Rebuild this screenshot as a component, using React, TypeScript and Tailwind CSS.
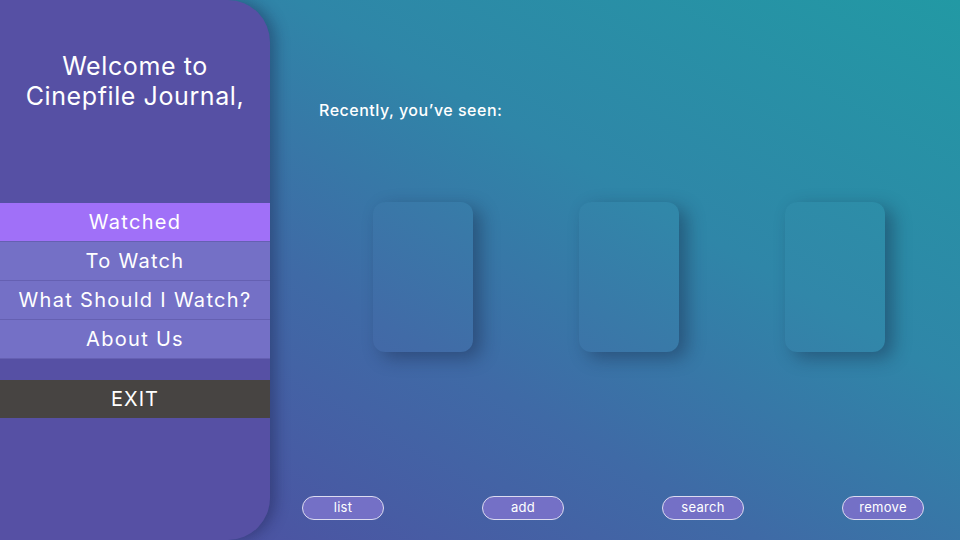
const menu = ["Watched", "To Watch", "What Should I Watch?", "About Us"];
const actions = ["list", "add", "search", "remove"];

export default function App() {
  return (
    <div
      className="flex h-[540px] w-[960px] overflow-hidden bg-[linear-gradient(30deg,#5249a1_0%,#3f6aa6_40%,#2f86a8_65%,#2299a4_100%)] text-white"
      style={{ fontFamily: "Inter, 'Open Sans', sans-serif" }}
    >
      {/* sidebar */}
      <aside className="z-10 flex w-[270px] shrink-0 flex-col rounded-r-[42px] bg-[#5650a4] shadow-[6px_0_14px_rgba(20,20,60,0.35)]">
        <h1 className="mt-[51px] px-2 text-center text-[25px] leading-[30px] font-normal tracking-[0.6px]">
          Welcome to
          <br />
          Cinepfile Journal,
        </h1>

        <nav className="mt-[92px] flex flex-col">
          {menu.map((item, i) => (
            <div
              key={item}
              className={`flex h-[39px] items-center justify-center border-b border-[#6560b2] text-[20px] tracking-[1.3px] ${
                i === 0 ? "bg-[#a070f8]" : "bg-[#7470c6]"
              }`}
            >
              {item}
            </div>
          ))}
        </nav>

        <div className="mt-[21px] flex h-[38px] items-center justify-center bg-[#474442] text-[20px] tracking-[1px]">EXIT</div>
      </aside>

      {/* main */}
      <main className="flex flex-1 flex-col">
        <p className="mt-[98px] ml-[49px] text-[16px] font-medium tracking-[0.5px]">Recently, you’ve seen:</p>

        <div className="mt-[80px] ml-[103px] flex gap-[106px]">
          {[0, 1, 2].map((n) => (
            <div
              key={n}
              className="h-[150px] w-[100px] rounded-[12px] bg-white/[0.01] shadow-[8px_6px_18px_rgba(20,30,60,0.4)]"
            />
          ))}
        </div>

        <div className="mt-auto mb-[20px] ml-[32px] flex gap-[98px]">
          {actions.map((a) => (
            <button
              key={a}
              className="flex h-[24px] w-[82px] items-center justify-center rounded-full border border-[#dcdcf0] bg-[#7470c6] text-[13px] tracking-[0.3px]"
            >
              {a}
            </button>
          ))}
        </div>
      </main>
    </div>
  );
}
